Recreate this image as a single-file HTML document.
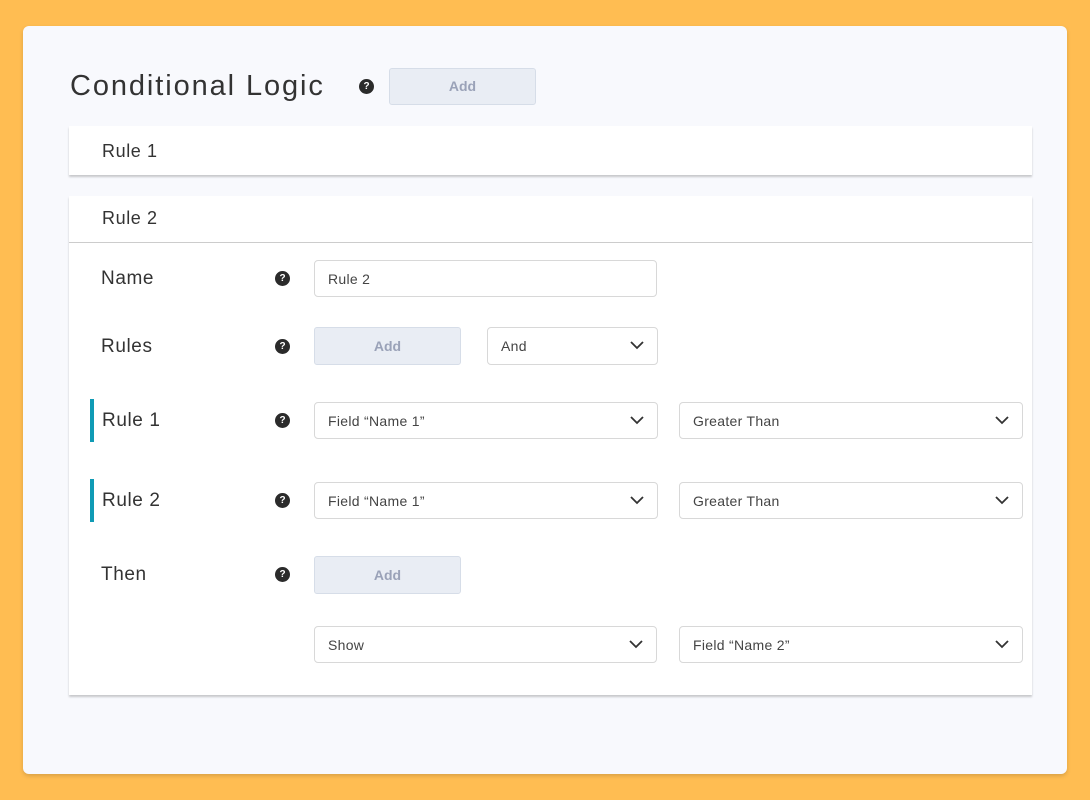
<!DOCTYPE html><html><head><style>
*{box-sizing:border-box;margin:0;padding:0}
body{width:1090px;height:800px;background:#FFBD52;font-family:"Liberation Sans",sans-serif;position:relative;overflow:hidden;color:#2e2e2e}
.card{position:absolute;left:23px;top:26px;width:1044px;height:748px;background:#f8f9fd;border-radius:6px;box-shadow:0 2px 4px rgba(0,0,0,.15)}
.a{position:absolute}
.h{font-size:29px;color:#333;left:70px;top:70px;letter-spacing:1.9px}
.q{width:15px;height:15px;border-radius:50%;background:#2b2b2b;color:#fff;font-size:10px;font-weight:bold;text-align:center;line-height:15px}
.btn{background:#e9edf4;border:1px solid #d6dde8;border-radius:3px;color:#9aa2b8;font-size:14px;text-align:center;font-weight:bold}
.panel{background:#fff;box-shadow:0 2px 2px rgba(0,0,0,.2)}
.pt{font-size:18px;color:#333;letter-spacing:.6px}
.lbl{font-size:19px;color:#333;letter-spacing:.6px}
.in{background:#fff;border:1px solid #d8d8d8;border-radius:4px;font-size:14px;color:#444;padding-left:13px;display:flex;align-items:center;letter-spacing:.3px}
.in svg{position:absolute;right:13px;top:13px}
.bar{width:4px;background:#0f9bb5}
</style></head><body>
<div class="card"></div>
<div class="a h">Conditional Logic</div>
<div class="a q" style="left:359px;top:79px">?</div>
<div class="a btn" style="left:389px;top:68px;width:147px;height:37px;line-height:35px">Add</div>

<div class="a panel" style="left:69px;top:126px;width:963px;height:49px"></div>
<div class="a pt" style="left:102px;top:141px">Rule 1</div>
<div class="a panel" style="left:69px;top:196px;width:963px;height:499px"></div>
<div class="a" style="left:69px;top:242px;width:963px;height:1px;background:#ccc"></div>
<div class="a pt" style="left:102px;top:208px">Rule 2</div>

<div class="a lbl" style="left:101px;top:268px">Name</div>
<div class="a q" style="left:275px;top:271px">?</div>
<div class="a in" style="left:314px;top:260px;width:343px;height:37px">Rule 2</div>

<div class="a lbl" style="left:101px;top:336px">Rules</div>
<div class="a q" style="left:275px;top:339px">?</div>
<div class="a btn" style="left:314px;top:327px;width:147px;height:38px;line-height:36px">Add</div>
<div class="a in" style="left:487px;top:327px;width:171px;height:38px">And<svg width="14" height="9" viewBox="0 0 14 9"><path d="M1 1l6 6 6-6" fill="none" stroke="#333" stroke-width="1.8"/></svg></div>

<div class="a bar" style="left:90px;top:399px;height:43px"></div>
<div class="a lbl" style="left:102px;top:410px">Rule 1</div>
<div class="a q" style="left:275px;top:413px">?</div>
<div class="a in" style="left:314px;top:402px;width:344px;height:37px">Field “Name 1”<svg width="14" height="9" viewBox="0 0 14 9"><path d="M1 1l6 6 6-6" fill="none" stroke="#333" stroke-width="1.8"/></svg></div>
<div class="a in" style="left:679px;top:402px;width:344px;height:37px">Greater Than<svg width="14" height="9" viewBox="0 0 14 9"><path d="M1 1l6 6 6-6" fill="none" stroke="#333" stroke-width="1.8"/></svg></div>

<div class="a bar" style="left:90px;top:479px;height:43px"></div>
<div class="a lbl" style="left:102px;top:490px">Rule 2</div>
<div class="a q" style="left:275px;top:493px">?</div>
<div class="a in" style="left:314px;top:482px;width:344px;height:37px">Field “Name 1”<svg width="14" height="9" viewBox="0 0 14 9"><path d="M1 1l6 6 6-6" fill="none" stroke="#333" stroke-width="1.8"/></svg></div>
<div class="a in" style="left:679px;top:482px;width:344px;height:37px">Greater Than<svg width="14" height="9" viewBox="0 0 14 9"><path d="M1 1l6 6 6-6" fill="none" stroke="#333" stroke-width="1.8"/></svg></div>

<div class="a lbl" style="left:101px;top:564px">Then</div>
<div class="a q" style="left:275px;top:567px">?</div>
<div class="a btn" style="left:314px;top:556px;width:147px;height:38px;line-height:36px">Add</div>

<div class="a in" style="left:314px;top:626px;width:343px;height:37px">Show<svg width="14" height="9" viewBox="0 0 14 9"><path d="M1 1l6 6 6-6" fill="none" stroke="#333" stroke-width="1.8"/></svg></div>
<div class="a in" style="left:679px;top:626px;width:344px;height:37px">Field “Name 2”<svg width="14" height="9" viewBox="0 0 14 9"><path d="M1 1l6 6 6-6" fill="none" stroke="#333" stroke-width="1.8"/></svg></div>
</body></html>
